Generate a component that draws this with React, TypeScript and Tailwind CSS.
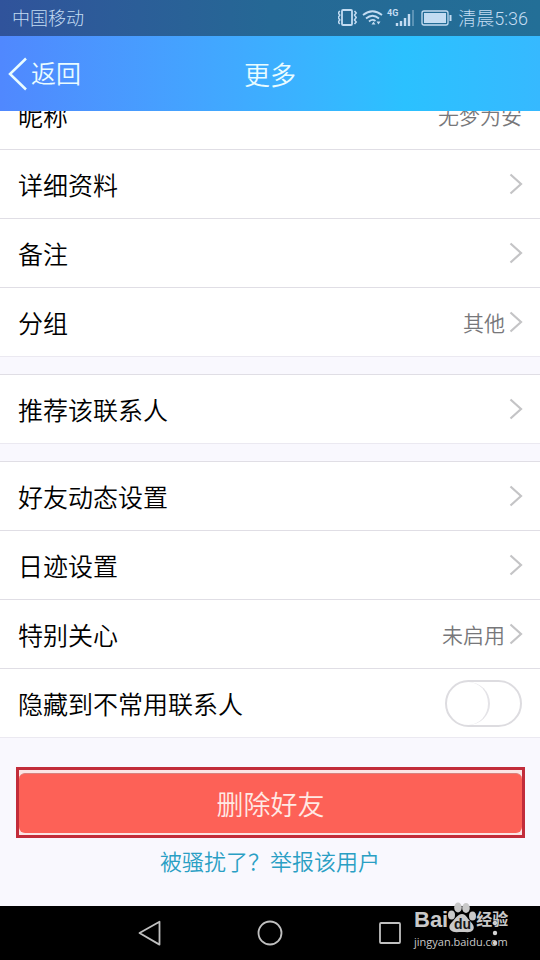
import type { ReactNode } from "react";

const sans = "font-['Roboto','Noto_Sans_CJK_SC',sans-serif]";

function Chevron() {
  return (
    <svg width="14" height="22" viewBox="0 0 14 22" fill="none" stroke="#c4c4c6" strokeWidth="2.2" aria-hidden="true">
      <path d="M1.500 1.500 12 11 1.500 20.500" />
    </svg>
  );
}

function Row({ label, value }: { label: string; value?: string }) {
  return (
    <button type="button" className="flex h-[69px] w-full shrink-0 items-center justify-between border-b border-[#e0dee5] pr-[17px] pl-[18px] text-left last:border-[#ebe9f1]">
      <span className="pt-1.5 text-[25px] leading-9 font-[350] text-black">{label}</span>
      <span className="flex items-center gap-1">
        {value && <span className="pt-1 text-[21px] leading-8 font-[350] text-[#77777a]">{value}</span>}
        <Chevron />
      </span>
    </button>
  );
}

function Group({ children }: { children: ReactNode }) {
  return <section className="border-t border-[#e0dee5] bg-white">{children}</section>;
}

function StatusBar() {
  return (
    <div className="flex h-9 items-center justify-between bg-linear-to-r from-[#30539b] via-[#256895] via-50% to-[#236f97] px-3 text-[18px] leading-6 font-light text-[#c3dcf2]">
      <span className="pt-0.5">中国移动</span>
      <div className="flex items-center">
        <svg width="116" height="22" viewBox="0 0 116 22" fill="none" stroke="currentColor" aria-hidden="true">
          <rect x="4" y="3" width="10" height="15" rx="1" strokeWidth="1.800" />
          <path d="M1.800 4 .2 6 1.800 8 .2 10.500 1.800 13 .2 15 1.800 17M16.500 4 18.200 6 16.500 8 18.200 10.500 16.500 13 18.200 15 16.500 17" strokeWidth="1.500" />
          <path d="M25 8Q34.500 .5 44 8M28 11.500Q34.500 6 41 11.500M31 14.500Q34.500 11.500 37.500 14" strokeWidth="1.800" />
          <path d="m33.500 17.500 2-3 2 3zM38.500 14.500h4l-2 3z" fill="currentColor" stroke="none" />
          <path d="M59 19v-3M63 19v-5M67 19V11M71 19V7" strokeWidth="2.400" />
          <path d="M75 19V3" strokeWidth="2" opacity=".35" />
          <rect x="84" y="4" width="26" height="14" rx="2" strokeWidth="1.300" />
          <rect x="86" y="6" width="22" height="10" fill="currentColor" stroke="none" />
          <path d="M112.500 8v6" strokeWidth="2" />
          <text x="49" y="9" fontSize="9" fontWeight="700" fill="currentColor" stroke="none" className="font-['Roboto',sans-serif]">4G</text>
        </svg>
        <span className="ml-1 pt-0.5">清晨5:36</span>
      </div>
    </div>
  );
}

function Watermark() {
  return (
    <div className="absolute -top-1 left-[414px] text-[#c9c9c9]">
      <div className="flex h-8 items-end whitespace-nowrap font-['Liberation_Sans','Noto_Sans_CJK_SC',sans-serif]">
        <span className="text-[22px] leading-7 font-bold">Bai</span>
        <svg width="28" height="32" viewBox="0 0 28 32" fill="currentColor" className="shrink-0" aria-hidden="true">
          <ellipse cx="3.500" cy="13" rx="3.500" ry="4.500" />
          <ellipse cx="10" cy="5.500" rx="3.800" ry="5" />
          <ellipse cx="18" cy="6" rx="3.800" ry="5" />
          <ellipse cx="24.500" cy="14" rx="3.500" ry="4.500" />
          <path d="M14 12c4 0 5 4 8 7s5 6 3 9-6 2-11 2-9 1-11.500-2-.5-6 2-8.500S10 12 14 12z" />
          <text x="6" y="27" fontSize="14" fontWeight="700" fill="#161616">du</text>
        </svg>
        <span className="text-[16px] leading-7 font-bold">经验</span>
      </div>
      <p className="text-[11px] leading-4 font-['Open_Sans',sans-serif]">jingyan.baidu.com</p>
    </div>
  );
}

function NavBar() {
  return (
    <nav aria-label="System" className="relative flex h-[54px] items-center bg-black pl-[137px] text-[#c0c0c0]">
      <button type="button" aria-label="Back">
        <svg width="26" height="26" viewBox="0 0 26 26" fill="none" stroke="currentColor" strokeWidth="1.800" strokeLinejoin="round">
          <path d="M2.500 13 22.500 1.800v22.800z" />
        </svg>
      </button>
      <button type="button" aria-label="Home" className="ml-[94px]">
        <svg width="26" height="26" viewBox="0 0 26 26" fill="none" stroke="currentColor" strokeWidth="1.800">
          <circle cx="13" cy="13" r="11.500" />
        </svg>
      </button>
      <button type="button" aria-label="Recent" className="ml-[94px]">
        <svg width="26" height="26" viewBox="0 0 26 26" fill="none" stroke="currentColor" strokeWidth="1.800">
          <rect x="3" y="3" width="20" height="20" rx="1" />
        </svg>
      </button>
      <svg width="8" height="28" viewBox="0 0 8 28" fill="#d4d4d4" className="absolute top-[13px] left-[491px]" aria-hidden="true">
        <circle cx="4" cy="4" r="2.200" />
        <circle cx="4" cy="14" r="2.200" />
        <circle cx="4" cy="24" r="2.200" />
      </svg>
      <Watermark />
    </nav>
  );
}

export default function App() {
  return (
    <div className={`flex min-h-screen flex-col bg-[#f9f8fe] ${sans}`}>
      <StatusBar />
      <header className="grid h-[75px] grid-cols-3 items-center bg-linear-to-r from-[#5088fe] via-[#2bc1ff] via-75% to-[#36b9ff] text-[#e9fcff]">
        <button type="button" className="flex items-center gap-1 justify-self-start pl-2 text-[25px] leading-9 font-[350]">
          <svg width="19" height="34" viewBox="0 0 19 34" fill="none" stroke="currentColor" strokeWidth="2.500" aria-hidden="true">
            <path d="M18 1.500 2 17 18 32.500" />
          </svg>
          <span className="pt-0.5">返回</span>
        </button>
        <h1 className="pt-1 text-center text-[26px] leading-9 font-[350]">更多</h1>
      </header>
      <main className="flex-1">
        <section className="bg-white">
          <div className="flex h-[39px] flex-col justify-end overflow-hidden">
            <button type="button" className="flex h-[69px] w-full shrink-0 items-center justify-between border-b border-[#e0dee5] pr-[18px] pl-[18px]">
              <span className="pt-1.5 text-[25px] leading-9 font-[350] text-black">昵称</span>
              <span className="pt-1 text-[21px] leading-8 font-[350] text-[#77777a]">无梦为安</span>
            </button>
          </div>
          <Row label="详细资料" />
          <Row label="备注" />
          <Row label="分组" value="其他" />
        </section>
        <div className="h-[17px]" />
        <Group>
          <Row label="推荐该联系人" />
        </Group>
        <div className="h-[17px]" />
        <Group>
          <Row label="好友动态设置" />
          <Row label="日迹设置" />
          <Row label="特别关心" value="未启用" />
          <label className="flex h-[69px] items-center justify-between border-b border-[#ebe9f1] pr-[18px] pl-[18px]">
            <span className="pt-1.5 text-[25px] leading-9 font-[350] text-black">隐藏到不常用联系人</span>
            <input
              type="checkbox"
              role="switch"
              className="h-[47px] w-[77px] appearance-none rounded-full border-2 border-[#dddce0] bg-white before:block before:size-[43px] before:rounded-full before:border-r-2 before:border-[#e4e3e7] checked:before:translate-x-[30px]"
            />
          </label>
        </Group>
        <div className="mt-[29px] mr-[15px] ml-4 border-3 border-[#c22c3a] bg-[#fbe4e4] pt-[3px] pb-[2px]">
          <button type="button" className="block h-[60px] w-full rounded-md border-t border-[#d9807c] bg-[#fd6157] pt-0.5 text-center text-[27px] leading-[60px] font-[350] text-[#ffe9e4]">
            删除好友
          </button>
        </div>
        <div className="mt-[9px] text-center">
          <a href="#report" className="text-[22px] leading-8 font-[350] text-[#2a9fc4]">被骚扰了？举报该用户</a>
        </div>
      </main>
      <NavBar />
    </div>
  );
}
